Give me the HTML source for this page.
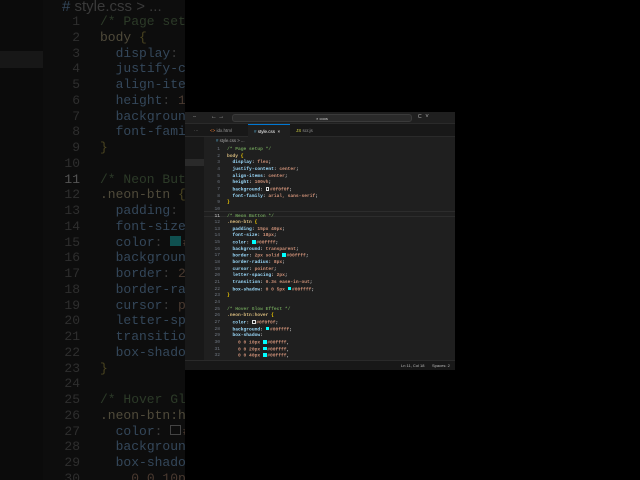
<!DOCTYPE html>
<html><head><style>
*{margin:0;padding:0;box-sizing:border-box}
body{width:640px;height:480px;background:#000;position:relative;overflow:hidden;font-family:"Liberation Mono",monospace}
#bg{position:absolute;left:0;top:0;width:185px;height:480px;background:#0d0d0d;overflow:hidden}
#bg .side{position:absolute;left:0;top:0;width:43px;height:480px;background:#0b0b0b}
#bg .sel{position:absolute;left:0;top:51px;width:43px;height:17px;background:#171717}
#bg .bc{position:absolute;left:62px;top:-2px;font:15px "Liberation Sans",sans-serif;color:#3a3a3a}
.code{position:absolute;white-space:pre}
.L{position:absolute;white-space:pre}
#big{left:0;top:14px;font-size:13px;line-height:15.75px}
#big .n{position:absolute;left:48px;width:32px;text-align:right;color:#2e2e2e}
#big .t{position:absolute;left:100px}
#big .c{color:#2c3a28}#big .s{color:#4f4a3a}#big .p{color:#34475a}#big .v{color:#4a3a30}#big .b{color:#4a4420}#big .w{color:#3a3a3a}
#big .sw{background:#0f5050}#big .sw2{border-color:#444}
.c{color:#6a9955}.s{color:#d7ba7d}.p{color:#9cdcfe}.v{color:#ce9178}.b{color:#ffd700}.w{color:#d4d4d4}
.sw{display:inline-block;width:.8em;height:.8em;background:#00ffff;vertical-align:-.05em;margin-right:.15em}
.sw2{display:inline-block;width:.8em;height:.8em;border:1px solid #ddd;vertical-align:-.05em;margin-right:.15em}
#win{position:absolute;left:185px;top:112px;width:270px;height:258px;background:#1f1f1f;overflow:hidden}
#title{position:absolute;left:0;top:0;width:270px;height:12px;background:#1f1f1f;border-bottom:1px solid #2a2a2a}
#search{position:absolute;left:47px;top:2px;width:180px;height:8px;background:#2a2a2a;border:1px solid #3a3a3a;border-radius:3px;color:#ccc;font:4px "Liberation Sans",sans-serif;text-align:center;line-height:7px}
#tabs{position:absolute;left:0;top:12px;width:270px;height:13px;background:#181818;border-bottom:1px solid #2a2a2a}
.tab{position:absolute;top:0;height:13px;font:4.5px "Liberation Sans",sans-serif;color:#999;line-height:13px;padding-left:6px}
#ed{position:absolute;left:19px;top:25px;width:251px;height:223px;background:#1f1f1f}
#sb{position:absolute;left:0;top:25px;width:19px;height:223px;background:#181818}
#small{left:0;top:10px;font-size:4.6px;line-height:6.65px;font-weight:bold}
#small .n{position:absolute;left:0;width:16px;text-align:right;color:#6e7681;font-weight:normal}
#small .t{position:absolute;left:23px}
#status{position:absolute;left:0;top:248px;width:270px;height:10px;background:#181818;border-top:1px solid #2a2a2a;color:#bbb;font:4px "Liberation Sans",sans-serif;line-height:9px}
</style></head><body>
<div id="bg"><div class="side"></div><div class="sel"></div>
<div class="bc"><span style="color:#34475a">#</span> style.css &gt; ...</div>
<div class="code" id="big">
<div class="L" style="top:0"><span class="n">1</span><span class="t c">/* Page setup */</span></div>
<div class="L" style="top:15.75px"><span class="n">2</span><span class="t"><span class="s">body</span> <span class="b">{</span></span></div>
<div class="L" style="top:31.5px"><span class="n">3</span><span class="t">  <span class="p">display</span><span class="w">: </span><span class="v">flex</span></span></div>
<div class="L" style="top:47.25px"><span class="n">4</span><span class="t">  <span class="p">justify-content</span></span></div>
<div class="L" style="top:63px"><span class="n">5</span><span class="t">  <span class="p">align-items</span></span></div>
<div class="L" style="top:78.75px"><span class="n">6</span><span class="t">  <span class="p">height</span><span class="w">: </span><span class="v">100vh</span></span></div>
<div class="L" style="top:94.5px"><span class="n">7</span><span class="t">  <span class="p">background</span><span class="w">:</span></span></div>
<div class="L" style="top:110.25px"><span class="n">8</span><span class="t">  <span class="p">font-family</span></span></div>
<div class="L" style="top:126px"><span class="n">9</span><span class="t b">}</span></div>
<div class="L" style="top:141.75px"><span class="n">10</span></div>
<div class="L" style="top:157.5px"><span class="n" style="color:#555">11</span><span class="t c">/* Neon Button */</span></div>
<div class="L" style="top:173.25px"><span class="n">12</span><span class="t"><span class="s">.neon-btn</span> <span class="b">{</span></span></div>
<div class="L" style="top:189px"><span class="n">13</span><span class="t">  <span class="p">padding</span><span class="w">: </span><span class="v">15px</span></span></div>
<div class="L" style="top:204.75px"><span class="n">14</span><span class="t">  <span class="p">font-size</span><span class="w">: </span></span></div>
<div class="L" style="top:220.5px"><span class="n">15</span><span class="t">  <span class="p">color</span><span class="w">: </span><span class="sw"></span><span class="v">#00ffff</span></span></div>
<div class="L" style="top:236.25px"><span class="n">16</span><span class="t">  <span class="p">background</span><span class="w">:</span></span></div>
<div class="L" style="top:252px"><span class="n">17</span><span class="t">  <span class="p">border</span><span class="w">: </span><span class="v">2px</span></span></div>
<div class="L" style="top:267.75px"><span class="n">18</span><span class="t">  <span class="p">border-radius</span></span></div>
<div class="L" style="top:283.5px"><span class="n">19</span><span class="t">  <span class="p">cursor</span><span class="w">: </span><span class="v">pointer</span></span></div>
<div class="L" style="top:299.25px"><span class="n">20</span><span class="t">  <span class="p">letter-spacing</span></span></div>
<div class="L" style="top:315px"><span class="n">21</span><span class="t">  <span class="p">transition</span><span class="w">:</span></span></div>
<div class="L" style="top:330.75px"><span class="n">22</span><span class="t">  <span class="p">box-shadow</span><span class="w">:</span></span></div>
<div class="L" style="top:346.5px"><span class="n">23</span><span class="t b">}</span></div>
<div class="L" style="top:362.25px"><span class="n">24</span></div>
<div class="L" style="top:378px"><span class="n">25</span><span class="t c">/* Hover Glow Effect */</span></div>
<div class="L" style="top:393.75px"><span class="n">26</span><span class="t"><span class="s">.neon-btn:hover</span></span></div>
<div class="L" style="top:409.5px"><span class="n">27</span><span class="t">  <span class="p">color</span><span class="w">: </span><span class="sw2"></span><span class="v">#0f0f0f</span></span></div>
<div class="L" style="top:425.25px"><span class="n">28</span><span class="t">  <span class="p">background</span><span class="w">:</span></span></div>
<div class="L" style="top:441px"><span class="n">29</span><span class="t">  <span class="p">box-shadow</span><span class="w">:</span></span></div>
<div class="L" style="top:456.75px"><span class="n">30</span><span class="t">    <span class="v">0 0 10px</span></span></div>
</div></div>

<div id="win">
<div id="title"><span style="position:absolute;left:8px;top:2px;color:#888;font-size:5px">⋯</span><span style="position:absolute;left:27px;top:1px;color:#aaa;font-size:6px">← →</span><div id="search">⌕ coos</div><span style="position:absolute;left:233px;top:1px;color:#aaa;font-size:6px">⊏ ˅</span></div>
<div id="tabs"><span class="tab" style="left:3px;color:#888">⋯</span>
<span class="tab" style="left:19px;width:44px"><span style="color:#e37933">&lt;&gt;</span> idx.html</span>
<span class="tab" style="left:63px;width:42px;background:#1f1f1f;color:#fff;border-top:1px solid #0078d4"><span style="color:#519aba">#</span> style.css &nbsp;×</span>
<span class="tab" style="left:105px"><span style="color:#cbcb41">JS</span> scr.js</span></div>
<div id="sb"><div style="position:absolute;left:0;top:22px;width:19px;height:7px;background:#2a2a2a"></div></div>
<div id="ed">
<div style="position:absolute;left:12px;top:0;font:4.3px 'Liberation Sans',sans-serif;color:#aaa;line-height:7px"><span style="color:#519aba">#</span> style.css &gt; ...</div>
<div style="position:absolute;left:0;top:73.5px;width:251px;height:6.65px;border-top:1px solid #2c2c2c;border-bottom:1px solid #2c2c2c"></div>
<div class="code" id="small">
<div class="L" style="top:0"><span class="n">1</span><span class="t c">/* Page setup */</span></div>
<div class="L" style="top:6.65px"><span class="n">2</span><span class="t"><span class="s">body</span> <span class="b">{</span></span></div>
<div class="L" style="top:13.3px"><span class="n">3</span><span class="t">  <span class="p">display</span><span class="w">: </span><span class="v">flex</span><span class="w">;</span></span></div>
<div class="L" style="top:19.95px"><span class="n">4</span><span class="t">  <span class="p">justify-content</span><span class="w">: </span><span class="v">center</span><span class="w">;</span></span></div>
<div class="L" style="top:26.6px"><span class="n">5</span><span class="t">  <span class="p">align-items</span><span class="w">: </span><span class="v">center</span><span class="w">;</span></span></div>
<div class="L" style="top:33.25px"><span class="n">6</span><span class="t">  <span class="p">height</span><span class="w">: </span><span class="v">100vh</span><span class="w">;</span></span></div>
<div class="L" style="top:39.9px"><span class="n">7</span><span class="t">  <span class="p">background</span><span class="w">: </span><span class="sw2" style="border-width:.5px"></span><span class="v">#0f0f0f</span><span class="w">;</span></span></div>
<div class="L" style="top:46.55px"><span class="n">8</span><span class="t">  <span class="p">font-family</span><span class="w">: </span><span class="v">arial, sans-serif</span><span class="w">;</span></span></div>
<div class="L" style="top:53.2px"><span class="n">9</span><span class="t b">}</span></div>
<div class="L" style="top:59.85px"><span class="n">10</span></div>
<div class="L" style="top:66.5px"><span class="n" style="color:#ccc">11</span><span class="t c">/* Neon Button */</span></div>
<div class="L" style="top:73.15px"><span class="n">12</span><span class="t"><span class="s">.neon-btn</span> <span class="b">{</span></span></div>
<div class="L" style="top:79.8px"><span class="n">13</span><span class="t">  <span class="p">padding</span><span class="w">: </span><span class="v">15px 40px</span><span class="w">;</span></span></div>
<div class="L" style="top:86.45px"><span class="n">14</span><span class="t">  <span class="p">font-size</span><span class="w">: </span><span class="v">18px</span><span class="w">;</span></span></div>
<div class="L" style="top:93.1px"><span class="n">15</span><span class="t">  <span class="p">color</span><span class="w">: </span><span class="sw"></span><span class="v">#00ffff</span><span class="w">;</span></span></div>
<div class="L" style="top:99.75px"><span class="n">16</span><span class="t">  <span class="p">background</span><span class="w">: </span><span class="v">transparent</span><span class="w">;</span></span></div>
<div class="L" style="top:106.4px"><span class="n">17</span><span class="t">  <span class="p">border</span><span class="w">: </span><span class="v">2px solid </span><span class="sw"></span><span class="v">#00ffff</span><span class="w">;</span></span></div>
<div class="L" style="top:113.05px"><span class="n">18</span><span class="t">  <span class="p">border-radius</span><span class="w">: </span><span class="v">8px</span><span class="w">;</span></span></div>
<div class="L" style="top:119.7px"><span class="n">19</span><span class="t">  <span class="p">cursor</span><span class="w">: </span><span class="v">pointer</span><span class="w">;</span></span></div>
<div class="L" style="top:126.35px"><span class="n">20</span><span class="t">  <span class="p">letter-spacing</span><span class="w">: </span><span class="v">2px</span><span class="w">;</span></span></div>
<div class="L" style="top:133px"><span class="n">21</span><span class="t">  <span class="p">transition</span><span class="w">: </span><span class="v">0.3s ease-in-out</span><span class="w">;</span></span></div>
<div class="L" style="top:139.65px"><span class="n">22</span><span class="t">  <span class="p">box-shadow</span><span class="w">: </span><span class="v">0 0 5px </span><span class="sw"></span><span class="v">#00ffff</span><span class="w">;</span></span></div>
<div class="L" style="top:146.3px"><span class="n">23</span><span class="t b">}</span></div>
<div class="L" style="top:152.95px"><span class="n">24</span></div>
<div class="L" style="top:159.6px"><span class="n">25</span><span class="t c">/* Hover Glow Effect */</span></div>
<div class="L" style="top:166.25px"><span class="n">26</span><span class="t"><span class="s">.neon-btn:hover</span> <span class="b">{</span></span></div>
<div class="L" style="top:172.9px"><span class="n">27</span><span class="t">  <span class="p">color</span><span class="w">: </span><span class="sw2" style="border-width:.5px"></span><span class="v">#0f0f0f</span><span class="w">;</span></span></div>
<div class="L" style="top:179.55px"><span class="n">28</span><span class="t">  <span class="p">background</span><span class="w">: </span><span class="sw"></span><span class="v">#00ffff</span><span class="w">;</span></span></div>
<div class="L" style="top:186.2px"><span class="n">29</span><span class="t">  <span class="p">box-shadow</span><span class="w">:</span></span></div>
<div class="L" style="top:192.85px"><span class="n">30</span><span class="t">    <span class="v">0 0 10px </span><span class="sw"></span><span class="v">#00ffff</span><span class="w">,</span></span></div>
<div class="L" style="top:199.5px"><span class="n">31</span><span class="t">    <span class="v">0 0 20px </span><span class="sw"></span><span class="v">#00ffff</span><span class="w">,</span></span></div>
<div class="L" style="top:206.15px"><span class="n">32</span><span class="t">    <span class="v">0 0 40px </span><span class="sw"></span><span class="v">#00ffff</span><span class="w">,</span></span></div>
</div></div>
<div id="status"><span style="position:absolute;left:216px">Ln 11, Col 18</span><span style="position:absolute;left:247px">Spaces: 2</span></div>
</div>
</body></html>
